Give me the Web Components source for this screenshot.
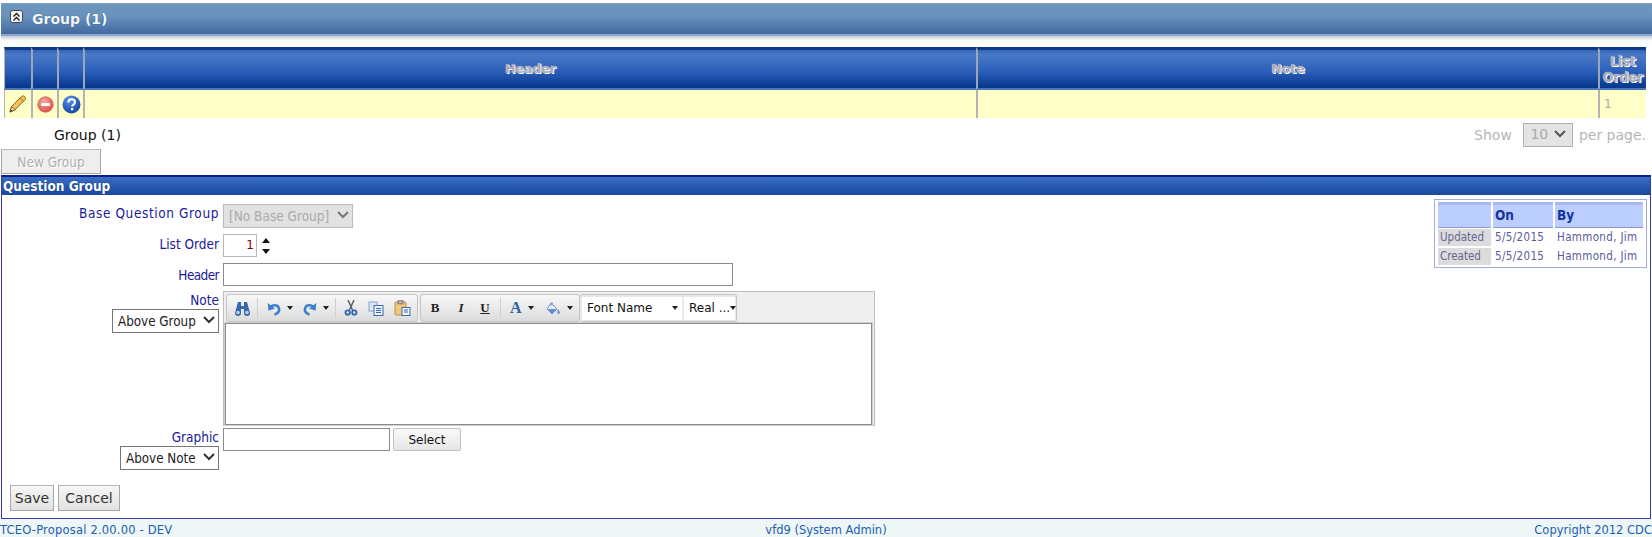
<!DOCTYPE html>
<html><head><meta charset="utf-8"><style>
html,body{margin:0;padding:0;background:#fff;height:537px;overflow:hidden}
body{font-family:"DejaVu Sans",sans-serif;font-size:13px}
</style></head><body>
<tc-page></tc-page>
<script>
const ICON={
pencil:`<svg width="20" height="20" viewBox="0 0 20 20"><path d="M2 18l1.500-5.500L13.500 2.500c1-.9 2.300-.7 3.200.2s1 2.200.2 3L7 15.800z" fill="#f3c35e" stroke="#8a6420" stroke-width="1"/><path d="M12 4l4 4" stroke="#c9912f" stroke-width="1.500"/><path d="M2 18l1.500-5.500 4 3.300z" fill="#f4dcae" stroke="#6d4d17" stroke-width=".8"/><path d="M2 18l.7-2.500 1.800 1.500z" fill="#333"/></svg>`,
minus:`<svg width="17" height="17" viewBox="0 0 17 17"><defs><radialGradient id="m" cx=".4" cy=".3" r=".8"><stop offset="0" stop-color="#f9a6a0"/><stop offset="1" stop-color="#d9463f"/></radialGradient></defs><circle cx="8.500" cy="8.500" r="7.700" fill="url(#m)" stroke="#c95a55" stroke-width=".8"/><rect x="4" y="7" width="9" height="3" rx="1" fill="#fff"/></svg>`,
help:`<svg width="19" height="19" viewBox="0 0 18 18"><defs><radialGradient id="q" cx=".4" cy=".25" r=".85"><stop offset="0" stop-color="#5b93e8"/><stop offset="1" stop-color="#0a3aa0"/></radialGradient></defs><circle cx="9" cy="9" r="8.500" fill="url(#q)"/><path d="M6 7c0-2 1.400-3 3.100-3S12.300 5 12.300 6.800c0 2.300-2.600 2.300-2.600 4.200" fill="none" stroke="#fff" stroke-width="2"/><rect x="8.500" y="12.300" width="2.200" height="2.200" fill="#fff"/></svg>`,
collapse:`<svg width="14" height="14" viewBox="0 0 14 14"><rect x=".5" y=".5" width="12" height="12" rx="2" fill="#eef1ee" stroke="#445"/><path d="M3.500 6.500l3-3 3 3M3.500 10.500l3-3 3 3" fill="none" stroke="#222" stroke-width="1.400"/></svg>`,
find:`<svg width="17" height="15" viewBox="0 0 17 15"><path d="M4 1h3v4h3V1h3l3 11a3 3 0 1 1-6 0V8H7v4a3 3 0 1 1-6 0z" fill="#3a66ad"/><circle cx="4" cy="11.500" r="1.800" fill="#bcd2ee"/><circle cx="13" cy="11.500" r="1.800" fill="#bcd2ee"/></svg>`,
undo:`<svg width="15" height="15" viewBox="0 0 15 15"><path d="M3 7c1.500-3.500 8-4 9 .5.600 3-1.500 5-4.500 6" fill="none" stroke="#3f7fcf" stroke-width="2.600"/><path d="M.8 2l.5 7.500 6.700-1.800z" fill="#3f7fcf"/></svg>`,
redo:`<svg width="15" height="15" viewBox="0 0 15 15"><path d="M12 7C10.500 3.500 4 3 3 7.500c-.6 3 1.500 5 4.500 6" fill="none" stroke="#3f7fcf" stroke-width="2.600"/><path d="M14.200 2l-.5 7.500L7 7.700z" fill="#3f7fcf"/></svg>`,
cut:`<svg width="14" height="16" viewBox="0 0 14 16"><path d="M4 0l4.500 10M10 0L5.500 10" stroke="#59606b" stroke-width="1.500"/><circle cx="3.700" cy="12.500" r="2.200" fill="none" stroke="#2f62b5" stroke-width="1.800"/><circle cx="10.300" cy="12.500" r="2.200" fill="none" stroke="#2f62b5" stroke-width="1.800"/></svg>`,
copy:`<svg width="16" height="15" viewBox="0 0 16 15"><rect x="1" y="1" width="8" height="9" fill="#dbe7f7" stroke="#85a3cf"/><rect x="6" y="4.500" width="9" height="10" fill="#eef4fb" stroke="#3a6bb3"/><path d="M8 7.500h5M8 9.500h5M8 11.500h5" stroke="#3a6bb3"/></svg>`,
paste:`<svg width="17" height="16" viewBox="0 0 17 16"><rect x="1" y="2" width="11" height="13" rx="1" fill="#eec77a" stroke="#b78f45"/><rect x="4" y=".8" width="5" height="3" fill="#bbb" stroke="#777"/><rect x="8" y="7.500" width="8" height="8" fill="#f2f6fb" stroke="#3a6bb3"/><path d="M10 10h4M10 12h4" stroke="#3a6bb3"/></svg>`,
fill:`<svg width="17" height="15" viewBox="0 0 17 15"><path d="M6 2l6 6-5 5-5-5z" fill="#e8eef7" stroke="#6b92c9"/><path d="M3 8h8l-4 5z" fill="#5f8fd0"/><path d="M5 1.500h3v3H5z" fill="#8aa9d6"/><path d="M13 8c1 2 2.500 3 1.500 4.500s-2.500 0-2-1.500z" fill="#5f8fd0"/></svg>`};

function def(name,html){customElements.define(name,class extends HTMLElement{constructor(){super();this.attachShadow({mode:'open'}).innerHTML=html;}})}

const UI='"DejaVu Sans",sans-serif';
const CD='"DejaVu Sans Condensed","DejaVu Sans",sans-serif';

def('tc-bar',`<style>:host{display:block;margin:3px 0 0 1px;height:38px;background:linear-gradient(#fff 0,#fff 33px,#bcc9d8 33px,#dfe4ea 35px,#fff 38px)}
.b{height:30px;border-top:1px solid #7d9cbc;border-bottom:2px solid #8fa9cd;display:flex;align-items:center;gap:8px;padding-left:9px;box-sizing:content-box;background:linear-gradient(#6d97bf 0,#6a92bc 40%,#4f77ab 80%,#45699f 100%);font:bold 14px ${UI};color:#f2f7fb;text-shadow:0 0 1px #23466f}
svg{display:block;margin-top:-4px}</style><div class="b">${ICON.collapse}<slot></slot></div>`);

def('tc-grid',`<style>:host{display:block;margin:6px 6px 0 4px}
.g{display:grid;grid-template-columns:27px 26px 26px 893px 622px 48px}
.h{height:38px;border-top:3px solid #0a3b8a;border-bottom:2px solid #4a76bb;display:flex;align-items:center;justify-content:center;text-align:center;background:linear-gradient(#3763b3 0,#4878c6 12%,#2d60bb 55%,#0d3f97 90%,#0a378a);font:bold 12.500px/16px ${UI};color:#a6adb8;text-shadow:1px 1px 0 #fff,0 0 1px #fff;border-left:2px solid #9da6b5;box-sizing:content-box}
.h:first-child{border-left:1px solid #b4b4b4}
.first{border-left-width:1px!important}
.ord{font-family:${CD};font-size:14px}
.c{height:28px;background:#ffffc8;border-left:2px solid #b4b4b4;display:flex;align-items:center;justify-content:center;box-sizing:border-box;font:12px ${UI};color:#aaa}
.c.l{justify-content:flex-start;padding-left:4px}
svg{display:block}</style>
<div class="g"><div class="h"></div><div class="h"></div><div class="h"></div><div class="h">Header</div><div class="h">Note</div><div class="h ord">List<br>Order</div>
<div class="c first">${ICON.pencil}</div><div class="c">${ICON.minus}</div><div class="c">${ICON.help}</div><div class="c"></div><div class="c"></div><div class="c l">1</div></div>`);

def('tc-pager',`<style>:host{display:flex;align-items:center;justify-content:space-between;height:32px;margin-right:6px;padding-left:54px;font:14px ${UI};box-sizing:border-box;padding-top:1px}
.r{display:flex;align-items:center;gap:5.500px;color:#b5b5b5}
.s{width:50px;height:24px;box-sizing:border-box;border:1px solid #b0b0b0;background:#e4e4e4;color:#aaa;display:flex;align-items:center;justify-content:space-between;padding:0 5px 2px 6px;margin:0 0 0 6px}
svg{display:block}</style><span style="color:#111">Group (1)</span>
<div class="r"><span>Show</span><div class="s"><span>10</span><svg width="14" height="9" viewBox="0 0 14 9"><path d="M2 2l5 5 5-5" fill="none" stroke="#555" stroke-width="2"/></svg></div><span>per page.</span></div>`);

def('tc-button',`<style>:host{display:inline-flex;align-items:center;justify-content:center;box-sizing:border-box;border:1px solid #a8a8a8;border-top-color:#b8b8b8;background:linear-gradient(#f6f6f6,#e2e2e2);font:14px ${UI};color:#333;height:var(--h,26px);width:var(--w,auto)}
:host([disabled]){color:#b0b0b0;background:#eee;text-shadow:1px 1px 0 #fff;font-family:${CD};font-size:13.500px}
:host([small]){font-size:12px;color:#111;border-radius:2px;border-color:#c0c0c0;background:linear-gradient(#fafafa,#e6e6e6)}</style><slot></slot>`);

def('tc-panel',`<style>:host{display:block;margin:0 1px 0 1px;border:1px solid #3a3aa8;border-top:2px solid #0b1f8f;height:344px;box-sizing:border-box;position:relative}
.t{height:18px;padding-left:1px;background:linear-gradient(#3a6fc4,#2455ad 60%,#1a4a9e);color:#fff;font:bold 13.500px/18px ${CD};text-shadow:0 0 1px #0a2a66}
.f{display:block;padding:9px 0 0 0}</style><div class="t"><slot name="title"></slot></div><div class="f"><slot></slot></div>`);

def('tc-row',`<style>:host{display:grid;grid-template-columns:217px 1fr;column-gap:4px;align-items:start}
.l{display:flex;flex-direction:column;align-items:flex-end;font:13.500px/18px ${CD};color:#1a1a9a;text-align:right}
.c{display:flex;align-items:center;gap:3px}</style><div class="l"><slot name="label"></slot></div><div class="c"><slot></slot></div>`);

def('tc-field',`<style>:host{display:inline-block;box-sizing:border-box;height:23px;background:#fff;border:1px solid #8a8a8a;font:13px/21px ${UI};color:#333;padding:0 4px}
:host([num]){text-align:right;border-color:#b8b8b8;color:#800000;padding-right:2px;font-size:12px}</style><slot></slot>`);

def('tc-select',`<style>:host{display:flex;align-items:center;justify-content:space-between;box-sizing:border-box;height:24px;background:#fff;border:1px solid #777;font:13.300px ${CD};color:#222;padding:0 2px 0 5px;white-space:nowrap;--chev:#333}
:host([disabled]){background:#e2e2e2;border-color:#bbb;color:#aaa;font-size:13.500px;--chev:#777}
svg{display:block;margin-top:-3px;flex:none}path{stroke:var(--chev)}</style><slot></slot><svg width="14" height="9" viewBox="0 0 14 9"><path d="M2 2l5 5 5-5" fill="none" stroke-width="2"/></svg>`);

def('tc-spin',`<style>:host{display:flex;flex-direction:column;gap:6px;margin-left:2px}svg{display:block}</style><svg width="8" height="5" viewBox="0 0 8 5"><path d="M4 0l4 5H0z" fill="#111"/></svg><svg width="8" height="5" viewBox="0 0 8 5"><path d="M4 5l4-5H0z" fill="#111"/></svg>`);

const drop=`<svg width="6" height="4" viewBox="0 0 6 4"><path d="M0 0h6L3 4z" fill="#222"/></svg>`;
def('tc-editor',`<style>:host{display:block;width:652px;height:135px;box-sizing:border-box;background:#efefef;border:1px solid #bdbdbd;padding:2px 2px 0 2px}
.tb{display:flex;height:28px;align-items:stretch}
.grp{display:flex;align-items:center;height:28px;border:1px solid #c4c4c4;border-radius:3px;background:linear-gradient(#f8f8f8,#dcdcdc);box-sizing:border-box;flex:none}
.i{display:flex;align-items:center;justify-content:center;height:20px;flex:none;box-sizing:border-box;font:bold 13px "Liberation Serif",serif;color:#222}
.w{justify-content:flex-start}
.sep{width:1px;height:20px;background:#cfcfcf;flex:none}
.cb{display:flex;align-items:center;justify-content:space-between;background:#fff;height:23px;font:12px ${UI};color:#111;box-sizing:border-box;white-space:nowrap;flex:none}
.ed{height:100px;margin:1px 0 0 -1px;background:#fff;border:1px solid #8c8c8c;box-shadow:0 0 0 1px #cfcfcf}
svg{display:block;flex:none}</style>
<div class="tb"><div class="grp" style="width:192px">
<span class="i" style="width:30px">${ICON.find}</span><span class="sep"></span>
<span class="i w" style="width:36px;padding-left:9px;gap:5px">${ICON.undo}${drop}</span><span class="i w" style="width:40px;padding-left:8px;gap:6px">${ICON.redo}${drop}</span><span class="sep" style="margin-left:1px"></span>
<span class="i" style="width:30px">${ICON.cut}</span><span class="i" style="width:20px">${ICON.copy}</span><span class="i" style="width:32px">${ICON.paste}</span></div>
<div class="grp" style="width:160px;margin-left:2px"><span class="i" style="width:28px;font-weight:900">B</span><span class="i" style="width:24px;font-style:italic">I</span><span class="i" style="width:24px;text-decoration:underline">U</span><span class="sep" style="margin-left:3px"></span>
<span class="i w" style="width:35px;padding-left:9px;gap:6px;color:#2f5da6;font-size:16px">A${drop}</span><span class="i w" style="width:37px;padding-left:9px;gap:5px">${ICON.fill}${drop}</span></div>
<div class="grp" style="width:157px;padding:0 1px 0 2px;border-left:0;background:#e8e8e8;gap:2px"><div class="cb" style="width:100px;padding:0 4px 0 5px">Font Name${drop}</div><div class="cb" style="width:51px;padding:0 3px 0 5px;font:11.500px ${CD}">Real ...${drop}</div></div></div>
<div class="ed"></div>`);

def('tc-audit',`<style>:host{position:absolute;top:22px;right:3px;display:block;width:213px;height:69px;box-sizing:border-box;border:1px solid #a3acdc;padding:2px 3px;font:11.500px ${CD};color:#5a5a9a}
.g{display:grid;grid-template-columns:53px 60px 1fr;column-gap:2px;row-gap:2px}
.h{height:22px;background:#bccdff;border-top:3px solid #a9b8ee;border-bottom:1px solid #8f9bcc;box-sizing:content-box;font:bold 13.500px/21px ${CD};color:#14349c;padding-left:2px;margin-bottom:-1px}
.r{height:17px;line-height:17px;padding-left:2px;white-space:nowrap}.k{background:#dcdcdc;color:#66668f}
.v{letter-spacing:.35px}
</style><div class="g"><div class="h"></div><div class="h">On</div><div class="h">By</div>
<div class="r k">Updated</div><div class="r v">5/5/2015</div><div class="r v">Hammond, Jim</div>
<div class="r k">Created</div><div class="r v">5/5/2015</div><div class="r v">Hammond, Jim</div></div>`);

def('tc-footer',`<style>:host{display:grid;grid-template-columns:1fr 1fr 1fr;height:18px;box-sizing:border-box;padding-top:5px;background:#eef6f6;font:11.500px/13px ${UI};color:#1c5fb0;overflow:hidden;white-space:nowrap}
.b{text-align:center}.c{text-align:right}.a{letter-spacing:.2px}</style><span class="a"><slot name="a"></slot></span><span class="b"><slot name="b"></slot></span><span class="c"><slot name="c"></slot></span>`);

def('tc-page',`<style>:host{display:block;height:537px;overflow:hidden}
.new{margin:-1px 0 1px 1px;display:block;height:25px}
tc-button[disabled]{--w:100px;--h:25px}
.s1{display:flex;gap:4px;padding:15px 0 0 8px}
.lb{letter-spacing:.6px}.lh{letter-spacing:-.6px;padding-top:3px}.lo{padding-top:1px}
.ln{line-height:17px;padding-top:1px}
</style>
<tc-bar>Group (1)</tc-bar>
<tc-grid></tc-grid>
<tc-pager></tc-pager>
<div class="new"><tc-button disabled>New Group</tc-button></div>
<tc-panel>
<span slot="title">Question Group</span>
<tc-audit></tc-audit>
<tc-row style="margin-bottom:6px"><span slot="label" class="lb">Base Question Group</span><tc-select disabled style="width:130px">[No Base Group]</tc-select></tc-row>
<tc-row style="margin-bottom:6px"><span slot="label" class="lo">List Order</span><tc-field num style="width:34px">1</tc-field><tc-spin></tc-spin></tc-row>
<tc-row style="margin-bottom:5px"><span slot="label" class="lh">Header</span><tc-field style="width:510px"></tc-field></tc-row>
<tc-row style="margin-bottom:2px"><span slot="label" class="ln">Note</span><tc-select slot="label" style="width:107px">Above Group</tc-select><tc-editor></tc-editor></tc-row>
<tc-row><span slot="label" class="ln">Graphic</span><tc-select slot="label" style="width:99px">Above Note</tc-select><tc-field style="width:167px"></tc-field><tc-button small style="--w:68px;--h:23px">Select</tc-button></tc-row>
<div class="s1"><tc-button style="--w:44px">Save</tc-button><tc-button style="--w:62px">Cancel</tc-button></div>
</tc-panel>
<tc-footer><span slot="a">TCEO-Proposal 2.00.00 - DEV</span><span slot="b">vfd9 (System Admin)</span><span slot="c">Copyright 2012 CDC</span></tc-footer>`);
</script></body></html>
